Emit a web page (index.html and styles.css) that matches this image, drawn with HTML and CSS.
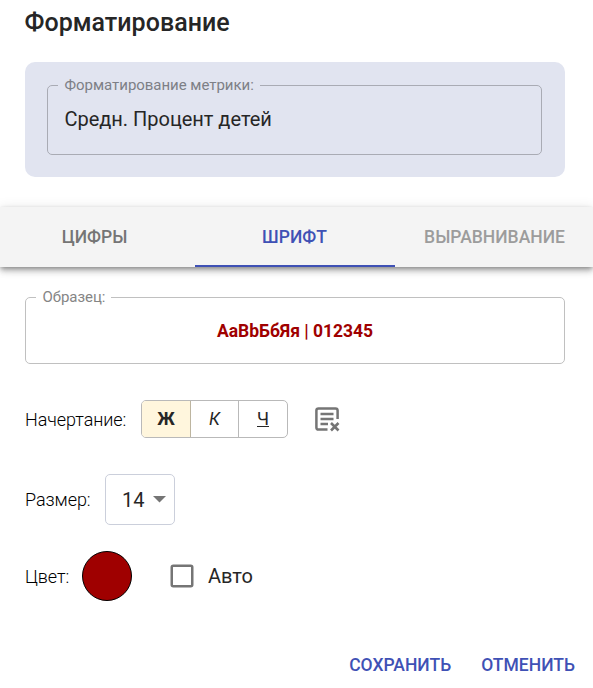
FILE: index.html
```html
<!DOCTYPE html>
<html lang="ru">
<head>
<meta charset="utf-8">
<title>Форматирование</title>
<link rel="stylesheet" href="styles.css">
</head>
<body>
<main class="dialog">
  <h2 class="title"><span>Форматирование</span></h2>
  <section class="metric">
    <fieldset class="outlined metric-field">
      <legend><span>Форматирование метрики:</span></legend>
      <div class="metric-name"><span>Средн. Процент детей</span></div>
    </fieldset>
  </section>
  <nav class="tabs">
    <button class="tab"><span>ЦИФРЫ</span></button>
    <button class="tab active"><span>ШРИФТ</span></button>
    <button class="tab disabled"><span>ВЫРАВНИВАНИЕ</span></button>
  </nav>
  <section class="panel">
    <fieldset class="outlined sample">
      <legend><span>Образец:</span></legend>
      <div class="sample-text"><span>AaBbБбЯя | 012345</span></div>
    </fieldset>
    <div class="row style-row">
      <span class="label">Начертание:</span>
      <div class="toggles">
        <button class="toggle on"><b>Ж</b></button>
        <button class="toggle"><i>К</i></button>
        <button class="toggle"><u>Ч</u></button>
      </div>
      <svg class="clear-icon" viewBox="0 0 26 26" width="26" height="26" fill="none" stroke="#757575">
        <path d="M13.5 23.6H4.5Q2.4 23.6 2.4 21.5V4.5Q2.4 2.4 4.5 2.4H21.5Q23.6 2.4 23.6 4.5V13" stroke-width="2.5"/>
        <path d="M6.5 8H19.5M6.5 13H19.5M6.5 18H14" stroke-width="2.4"/>
        <path d="M17 17L24.5 24.5M24.5 17L17 24.5" stroke-width="2.6"/>
      </svg>
    </div>
    <div class="row size-row">
      <span class="label">Размер:</span>
      <div class="select"><span>14</span><svg viewBox="0 0 13 6.5" width="13" height="6.5"><path d="M0 0H13L6.5 6.5Z" fill="#757575"/></svg></div>
    </div>
    <div class="row color-row">
      <span class="label">Цвет:</span>
      <span class="swatch"></span>
      <svg class="checkbox" viewBox="0 0 24 24" width="24" height="24"><rect x="1.75" y="1.75" width="20.5" height="20.5" rx="1.5" fill="none" stroke="#757575" stroke-width="2.5"/></svg>
      <span class="auto">Авто</span>
    </div>
  </section>
  <footer class="actions">
    <button class="action"><span>СОХРАНИТЬ</span></button>
    <button class="action"><span>ОТМЕНИТЬ</span></button>
  </footer>
</main>
</body>
</html>
```
FILE: styles.css
```css
* { box-sizing: border-box; }
body { margin: 0; background: #fff; color: #262626; font-family: Roboto, "Liberation Sans", sans-serif; font-size: 20px; }
button { font: inherit; color: inherit; border: 0; padding: 0; margin: 0; background: none; }
.dialog { width: 593px; height: 688px; overflow: hidden; }
.title { margin: 0; padding-left: 24.5px; height: 62px; font-size: 25px; font-weight: 500; line-height: 46px; letter-spacing: .03px; }
.metric { margin: 0 28px 0 25px; height: 115px; padding: 14px 23px 22px 22px; border-radius: 10px; background: #e1e4f0; }
.outlined { margin: 0; min-width: 0; padding: 0 10px; border: 1px solid #c0c0c0; border-radius: 5px; }
.outlined legend { margin: 0; padding: 0 6px 0 6.5px; height: 18px; line-height: 18px; font-size: 15px; letter-spacing: -.03px; color: #858585; }
.metric-field { height: 79px; border-color: #a9abb4; }
.metric-field legend { color: #7d7f86; }
.metric-name { padding: 9px 0 0 6.5px; line-height: 32px; letter-spacing: -.02px; }
.tabs { display: flex; margin-top: 30px; height: 60px; background: #f4f4f4; box-shadow: 0 2px 5px -1px rgba(0,0,0,.4), 0 5px 6px rgba(0,0,0,.15), 0 1px 12px rgba(0,0,0,.1); }
.tab { flex: 0 0 200px; height: 60px; font-size: 17.5px; font-weight: 500; color: #757575; }
.tab:first-child { flex-basis: 195px; padding-right: 6px; }
.tab.active { color: #3f51b5; border-bottom: 2px solid #3f51b5; padding-top: 2px; padding-right: 1px; }
.tab.disabled { color: #9c9c9c; padding-right: 1px; }
.panel { padding: 21px 28px 0 25px; }
.sample { height: 76px; }
.sample-text { padding-top: 9px; text-align: center; color: #9f0000; font-size: 17.5px; font-weight: 700; line-height: 32px; letter-spacing: -.03px; }
.row { display: flex; align-items: center; }
.label { font-size: 18px; font-weight: 300; letter-spacing: -.06px; color: #000; }
.style-row .label { width: 101px; padding-top: 1px; }
.size-row .label { width: 65px; }
.color-row .label { width: 44px; padding-top: 1px; }
.style-row { height: 38px; margin-top: 36px; }
.toggles { display: flex; width: 147px; height: 38px; margin-left: 15px; border: 1px solid #b9b9b9; border-radius: 5px; overflow: hidden; }
.toggle { flex: 0 0 48px; font-size: 17.5px; border-right: 1px solid #b9b9b9; }
.toggle:last-child { border: 0; }
.toggle.on { flex-basis: 49px; background: #fff6dd; border-color: #bdb5a0; }
.clear-icon { margin-left: 26px; }
.size-row { height: 51px; margin-top: 36px; }
.select { display: flex; align-items: center; width: 70px; height: 51px; margin-left: 15px; padding-left: 16px; border: 1px solid #cbcfdb; border-radius: 5px; }
.select svg { margin-left: 9px; }
.color-row { height: 50px; margin-top: 26px; }
.swatch { width: 50px; height: 50px; margin-left: 13px; border: 1px solid #000; border-radius: 50%; background: #9f0000; }
.checkbox { margin-left: 38px; }
.auto { margin-left: 14px; }
.actions { display: flex; justify-content: flex-end; gap: 30px; margin-top: 42px; padding-right: 18px; }
.action { height: 44px; color: #3f51b5; font-size: 17.5px; font-weight: 500; }
```
